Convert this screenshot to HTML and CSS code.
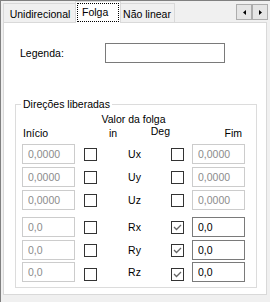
FILE: index.html
```html
<!DOCTYPE html>
<html lang="pt">
<head>
  <meta charset="UTF-8" />
  <title>Folga</title>
  <link rel="stylesheet" href="styles.css">
</head>
<body>
  <div class="window">
    <div class="tabs">
      <div class="tab first">Unidirecional</div>
      <div class="tab active"><span class="focus">Folga</span></div>
      <div class="tab last">Não linear</div>
      <div class="scroll">
        <button class="arrow"><svg width="3" height="5" viewBox="0 0 3 5"><polygon points="3,0 3,5 0,2.5" fill="#000"/></svg></button>
        <button class="arrow"><svg width="3" height="5" viewBox="0 0 3 5"><polygon points="0,0 0,5 3,2.5" fill="#000"/></svg></button>
      </div>
    </div>

    <div class="panel">
      <div class="legenda">
        <label for="legenda">Legenda:</label>
        <input type="text" id="legenda" class="field wide">
      </div>

      <!-- Direções liberadas -->
      <fieldset class="group">
        <legend>Direções liberadas</legend>
        <div class="grid">
          <div class="head-valor">Valor da folga</div>
          <div class="head-inicio">Início</div>
          <div class="head-mid"><span>in</span><span>Deg</span></div>
          <div class="head-fim">Fim</div>

          <input class="field off" value="0,0000" disabled>
          <span class="check"></span>
          <span class="axis">Ux</span>
          <span class="check"></span>
          <input class="field off" value="0,0000" disabled>

          <input class="field off" value="0,0000" disabled>
          <span class="check"></span>
          <span class="axis">Uy</span>
          <span class="check"></span>
          <input class="field off" value="0,0000" disabled>

          <input class="field off" value="0,0000" disabled>
          <span class="check"></span>
          <span class="axis">Uz</span>
          <span class="check"></span>
          <input class="field off" value="0,0000" disabled>

          <input class="field off" value="0,0" disabled>
          <span class="check"></span>
          <span class="axis">Rx</span>
          <span class="check on"><svg width="11" height="11" viewBox="0 0 11 11"><polyline points="2,5 4.5,7.5 9,3" fill="none" stroke="#666" stroke-width="1.3"/></svg></span>
          <input class="field" value="0,0">

          <input class="field off" value="0,0" disabled>
          <span class="check"></span>
          <span class="axis">Ry</span>
          <span class="check on"><svg width="11" height="11" viewBox="0 0 11 11"><polyline points="2,5 4.5,7.5 9,3" fill="none" stroke="#666" stroke-width="1.3"/></svg></span>
          <input class="field" value="0,0">

          <input class="field off" value="0,0" disabled>
          <span class="check low"></span>
          <span class="axis">Rz</span>
          <span class="check low on"><svg width="11" height="11" viewBox="0 0 11 11"><polyline points="2,5 4.5,7.5 9,3" fill="none" stroke="#666" stroke-width="1.3"/></svg></span>
          <input class="field" value="0,0">
        </div>
      </fieldset>
    </div>
  </div>
</body>
</html>
```

FILE: styles.css
```css
* {
  box-sizing: border-box;
  margin: 0;
  padding: 0;
}
body {
  background: #f0f0f0;
  color: #000;
  font-family: 'Liberation Sans', Arial, sans-serif;
  font-size: 10.5px;
}
.window {
  width: 270px;
  height: 302px;
  border-top: 1px solid #808080;
  border-left: 1px solid #808080;
  padding-left: 2px;
}

/* abas */
.tabs {
  display: flex;
  align-items: flex-start;
  width: 264px;
  height: 22px;
  margin-bottom: -1px;
}
.tab {
  margin-top: 2px;
  height: 19px;
  padding-top: 2px;
  line-height: 17px;
  text-align: center;
  background: #f0f0f0;
  border: 1px solid #d9d9d9;
  border-bottom: none;
}
.tab.first {
  width: 74px;
}
.tab.last {
  width: 56px;
}
.tab.active {
  position: relative;
  z-index: 1;
  margin: 0 -2px;
  height: 22px;
  padding: 1px 1px 1px;
  background: #fff;
  line-height: 17px;
}
.focus {
  display: block;
  width: 42px;
  height: 19px;
  padding-left: 4px;
  text-align: left;
  border: 1px dotted #000;
}
.scroll {
  display: flex;
  margin: 3px -1px 0 auto;
}
.arrow {
  display: flex;
  align-items: center;
  justify-content: center;
  width: 16px;
  height: 16px;
  background: #e5e5e5;
  border: 1px solid #adadad;
}

/* painel */
.panel {
  width: 264px;
  height: 273px;
  padding-top: 20px;
  background: #fff;
  border: 1px solid #d9d9d9;
}
.legenda {
  display: flex;
  align-items: center;
  padding-left: 16px;
}
.legenda label {
  width: 85px;
}
.field {
  display: block;
  width: 53px;
  height: 20px;
  padding: 0 5px;
  font: inherit;
  color: #000;
  background: #fff;
  border: 1px solid #7a7a7a;
  outline: none;
}
.field.wide {
  width: 120px;
}
.field.off {
  color: #8c8c8c;
  border-color: #cccccc;
}

/* grupo */
.group {
  margin: 35px 9px 0 11px;
  padding: 1px 6px 5px;
  border: 1px solid #dcdcdc;
}
.group legend {
  margin-left: -1px;
  padding: 0 2px;
  line-height: 13px;
}
.grid {
  display: grid;
  grid-template-columns: 62px 13px 74px 21px 53px;
  grid-template-rows: 14px 18px 23px 23px 27px 23px 22px 20px;
  align-items: start;
  justify-items: start;
  line-height: 14px;
}
.head-valor {
  grid-row: 1;
  grid-column: 1 / -1;
  justify-self: center;
}
.head-inicio {
  grid-row: 2;
  grid-column: 1;
  padding-left: 1px;
}
.head-mid {
  grid-row: 2;
  grid-column: 2 / 5;
  justify-self: stretch;
  display: flex;
  justify-content: space-between;
  padding: 0 22px 0 25px;
}
.head-mid span:last-child {
  margin-top: -2px;
}
.head-fim {
  grid-row: 2;
  grid-column: 5;
  justify-self: end;
  margin-right: 3px;
}
.check {
  display: flex;
  align-items: center;
  justify-content: center;
  width: 13px;
  height: 13px;
  margin-top: 4px;
  background: #fff;
  border: 1px solid #333;
}
.check.low {
  margin-top: 6px;
}
.axis {
  justify-self: center;
  line-height: 20px;
  margin-left: 1px;
}
```
